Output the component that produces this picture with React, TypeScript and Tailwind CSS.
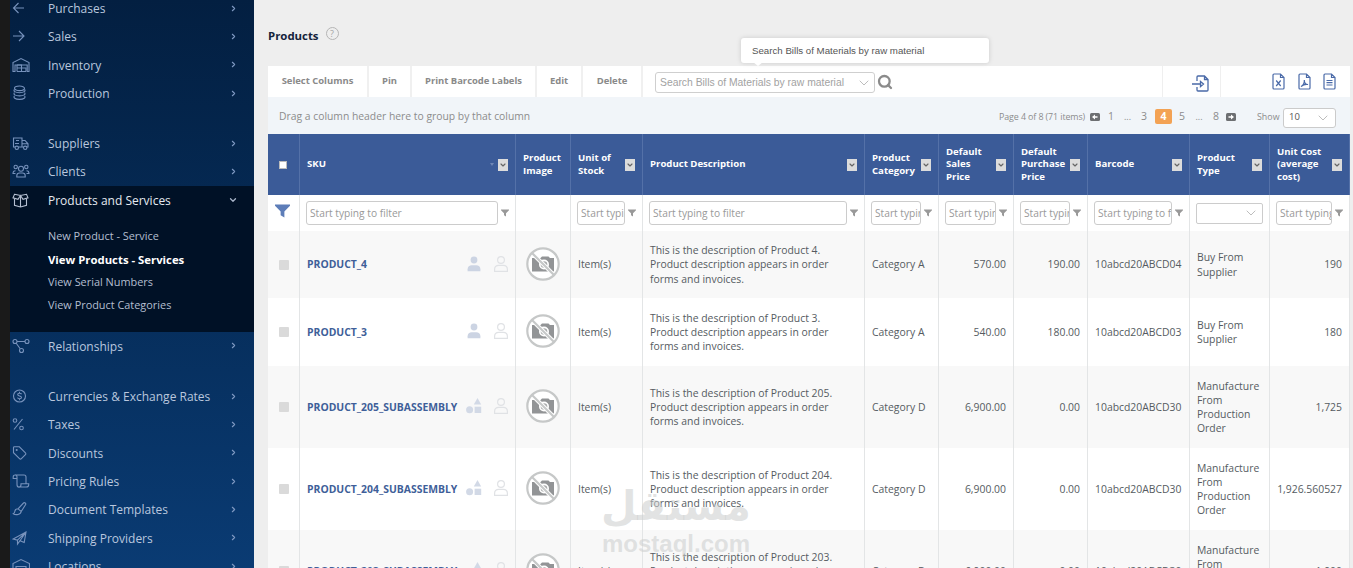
import React from 'react';
import { Search, ChevronRight, ChevronDown } from 'lucide-react';

interface NavItem {
  label: string;
  icon: React.ReactNode;
}

interface Product {
  sku: string;
  assembly: boolean;
  description: string;
  category: string;
  salesPrice: string;
  purchasePrice: string;
  barcode: string;
  type: string;
  unitCost: string;
  height: string;
}

const COLUMNS = 'grid grid-cols-[32px_216px_55px_72px_222px_74px_75px_74px_102px_80px_80px]';

const icons = {
  left: <path d="M12 9H1.500M6.500 4L1.500 9l5 5" />,
  right: <path d="M1 9h10.500M7 4l5 5-5 5" />,
  warehouse: (
    <>
      <path d="M1 15.500V6.500L9 2.500l8 4v9h-1.800V9H3v6.500z" />
      <path d="M5 15.500h9M5 12h4.500M5 9v6.500M5 9h4.500v6.500M9.500 12H14v3.500" />
    </>
  ),
  stack: (
    <>
      <ellipse cx="7.500" cy="4.300" rx="5" ry="2.300" />
      <path d="M2.500 5.500c-1.500 1.500.5 3.200 5 3.200s6.500-1.700 5-3.200M2.500 8.700c-1.500 1.500.5 3.200 5 3.200s6.500-1.700 5-3.200M2.500 11.900c-1.500 1.500.5 3.500 5 3.500s6.500-2 5-3.500" />
    </>
  ),
  truck: (
    <>
      <path d="M3 13H1.500V4h8.500v9H6.500M10 6.500h3l3 3.300V13h-1M10 13h1.500M10 9.800h6M4 6.500h3M3 9.500h4" />
      <circle cx="4.800" cy="13.800" r="1.700" />
      <circle cx="13.200" cy="13.800" r="1.700" />
    </>
  ),
  users: (
    <>
      <circle cx="9" cy="6.800" r="2.500" />
      <path d="M4.800 15v-1.300c0-1.700 1.300-2.700 2.700-2.700h3c1.400 0 2.700 1 2.700 2.700V15zM3.500 8.700C1.800 8.700 1 9.800 1 11.500h2.500M14.500 8.700c1.700 0 2.500 1.100 2.500 2.800h-2.500" />
      <circle cx="3.700" cy="5" r="1.700" />
      <circle cx="14.300" cy="5" r="1.700" />
    </>
  ),
  box: (
    <>
      <path d="M2.500 8v6.300l6 1.700 6-1.700V8M8.500 5v11" />
      <path d="M2.500 3.300L8.500 4.500l6-1.200L16 6.800l-5 1.500L8.500 4.500 6 8.300 1 6.800z" />
    </>
  ),
  relations: (
    <>
      <circle cx="3" cy="4.500" r="2" />
      <circle cx="15" cy="4.500" r="2" />
      <circle cx="9.500" cy="13.500" r="2" />
      <path d="M5 4.500h8M4.200 6.200l4 5.600" />
    </>
  ),
  dollar: (
    <>
      <circle cx="7.500" cy="9" r="6" />
      <path d="M9.500 7.200C9 5.800 5.700 5.900 5.700 7.500c0 2 3.800 1 3.800 3 0 1.700-3.500 1.700-4 .2M7.500 4.800V6M7.500 12v1.300" />
    </>
  ),
  percent: (
    <>
      <path d="M10.500 4L2 14.500" />
      <circle cx="3" cy="5.500" r="1.800" />
      <circle cx="9.500" cy="13" r="1.800" />
    </>
  ),
  tag: (
    <>
      <path d="M1.500 3.500v5.200l6 6c.6.6 1.300.6 1.900 0l4-4c.6-.6.6-1.300 0-1.900l-6-6H2.500c-.600 0-1 .3-1 .7z" />
      <circle cx="4.700" cy="6" r=".5" />
    </>
  ),
  scroll: (
    <path d="M5 6.500H1.200V5C1.200 2.300 5 2.300 5 5v7.500c0 3.500 4 3.500 4 0v-.8h7.700v1c0 1.500-1 2.300-2.500 2.300H7M3.200 3h8.800c1.300 0 2 .8 2 2v6.500" />
  ),
  brush: (
    <path d="M6 8.800L11.500 3c1-1 3 .3 2 1.800L9.200 11.500 6 8.800zM6 8.800c-2 0-3 1-3.200 2.700-.1 1.300-.6 1.800-1.500 2.200 2.500 1.800 7.500 1 7.900-2.200" />
  ),
  plane: <path d="M1.200 10L14 3l-1.800 10.500-4.200-1.800L5.500 15v-3.800zM5.500 11.200L14 3 8 11.700" />,
  location: (
    <>
      <path d="M1 16V6.500L9 2.500l8.500 4V16" />
      <path d="M4 16V9.500h10V16M4 12h10" />
    </>
  ),
};

const mainNav: NavItem[] = [
  { label: 'Purchases', icon: icons.left },
  { label: 'Sales', icon: icons.right },
  { label: 'Inventory', icon: icons.warehouse },
  { label: 'Production', icon: icons.stack },
];

const partnerNav: NavItem[] = [
  { label: 'Suppliers', icon: icons.truck },
  { label: 'Clients', icon: icons.users },
];

const setupNav: NavItem[] = [
  { label: 'Currencies & Exchange Rates', icon: icons.dollar },
  { label: 'Taxes', icon: icons.percent },
  { label: 'Discounts', icon: icons.tag },
  { label: 'Pricing Rules', icon: icons.scroll },
  { label: 'Document Templates', icon: icons.brush },
  { label: 'Shipping Providers', icon: icons.plane },
  { label: 'Locations', icon: icons.location },
];

const productLinks = ['New Product - Service', 'View Products - Services', 'View Serial Numbers', 'View Product Categories'];

const headers = [
  { label: 'SKU', menu: true, sorted: true },
  { label: 'Product Image', menu: false },
  { label: 'Unit of Stock', menu: true },
  { label: 'Product Description', menu: true },
  { label: 'Product Category', menu: true },
  { label: 'Default Sales Price', menu: true },
  { label: 'Default Purchase Price', menu: true },
  { label: 'Barcode', menu: true },
  { label: 'Product Type', menu: true },
  { label: 'Unit Cost (average cost)', menu: true },
];

const products: Product[] = [
  { sku: 'PRODUCT_4', assembly: false, description: 'Product 4', category: 'Category A', salesPrice: '570.00', purchasePrice: '190.00', barcode: '10abcd20ABCD04', type: 'Buy From Supplier', unitCost: '190', height: 'h-[67px]' },
  { sku: 'PRODUCT_3', assembly: false, description: 'Product 3', category: 'Category A', salesPrice: '540.00', purchasePrice: '180.00', barcode: '10abcd20ABCD03', type: 'Buy From Supplier', unitCost: '180', height: 'h-[68px]' },
  { sku: 'PRODUCT_205_SUBASSEMBLY', assembly: true, description: 'Product 205', category: 'Category D', salesPrice: '6,900.00', purchasePrice: '0.00', barcode: '10abcd20ABCD30', type: 'Manufacture From Production Order', unitCost: '1,725', height: 'h-[82px]' },
  { sku: 'PRODUCT_204_SUBASSEMBLY', assembly: true, description: 'Product 204', category: 'Category D', salesPrice: '6,900.00', purchasePrice: '0.00', barcode: '10abcd20ABCD30', type: 'Manufacture From Production Order', unitCost: '1,926.560527', height: 'h-[82px]' },
  { sku: 'PRODUCT_203_SUBASSEMBLY', assembly: true, description: 'Product 203', category: 'Category D', salesPrice: '6,900.00', purchasePrice: '0.00', barcode: '10abcd20ABCD30', type: 'Manufacture From Production Order', unitCost: '1,900', height: 'h-[82px]' },
];

function NavRow({ item, active }: { item: NavItem; active?: boolean }) {
  return (
    <div className="flex h-[28.33px] items-center pl-[2px] pr-[16px]">
      <svg viewBox="0 0 18 18" className={`size-[18px] fill-none ${active ? 'stroke-[#b5c0d2]' : 'stroke-[#7792bc]'}`} strokeWidth="1.1">
        {item.icon}
      </svg>
      <span className={`ml-[18px] flex-1 whitespace-nowrap pt-[2px] text-[12px] font-medium ${active ? 'text-[#e4e9f0]' : 'text-[#b9c7de]'}`}>
        {item.label}
      </span>
      {active ? (
        <ChevronDown className="size-[10px] text-[#a9b6ca]" strokeWidth={3} />
      ) : (
        <ChevronRight className="size-[9px] text-[#7f99c2]" strokeWidth={3} />
      )}
    </div>
  );
}

function Sidebar() {
  return (
    <aside className="w-[254px] shrink-0 overflow-hidden border-l-[10px] border-[#1a1a1a] bg-gradient-to-b from-[#031f41] to-[#0a3b73]">
      <nav className="-mt-[6px] flex flex-col">
        {mainNav.map((item) => (
          <NavRow key={item.label} item={item} />
        ))}
        <div className="mt-[21.700px]">
          {partnerNav.map((item) => (
            <NavRow key={item.label} item={item} />
          ))}
        </div>
        <div className="h-[146px] bg-[#001126]">
          <NavRow item={{ label: 'Products and Services', icon: icons.box }} active />
          <ul className="pl-[38px] pt-[10.500px]">
            {productLinks.map((link, idx) => (
              <li
                key={link}
                className={`flex h-[23.200px] items-center whitespace-nowrap ${
                  idx === 1 ? 'text-[11.350px] font-bold text-white' : 'text-[10.900px] text-[#b4bfd0]'
                }`}
              >
                {link}
              </li>
            ))}
          </ul>
        </div>
        <NavRow item={{ label: 'Relationships', icon: icons.relations }} />
        <div className="mt-[22px]">
          {setupNav.map((item) => (
            <NavRow key={item.label} item={item} />
          ))}
        </div>
      </nav>
    </aside>
  );
}

function DocIcon({ children }: { children: React.ReactNode }) {
  return (
    <svg viewBox="0 0 13 17" className="h-[17px] w-[13px] fill-none stroke-[#4a6aa8]" strokeWidth="1.200">
      <path d="M1 2c0-.6.4-1 1-1h6.500L12 4.500V15c0 .6-.4 1-1 1H2c-.6 0-1-.4-1-1zM8.500 1v3.500H12" />
      {children}
    </svg>
  );
}

function Toolbar() {
  const actions = [
    { label: 'Select Columns', width: 'w-[101px]' },
    { label: 'Pin', width: 'w-[43px]' },
    { label: 'Print Barcode Labels', width: 'w-[125px]' },
    { label: 'Edit', width: 'w-[46px]' },
    { label: 'Delete', width: 'w-[60px]' },
  ];
  return (
    <div className="flex h-[31px] bg-white text-[#8a8a8a]">
      {actions.map((action) => (
        <button key={action.label} className={`${action.width} whitespace-nowrap border-r-2 border-[#f0f0f0] text-[9.450px] font-bold`}>
          {action.label}
        </button>
      ))}
      <div className="relative flex flex-1 items-center pl-[12px]">
        <div className="mt-[2px] flex h-[21px] w-[220px] items-center justify-between rounded-[3px] border border-[#cfcfcf] pl-[4px] pr-[2px] font-['Liberation_Sans',sans-serif] text-[10.350px] text-[#a2a2a2]">
          <span className="whitespace-nowrap">Search Bills of Materials by raw material</span>
          <ChevronDown className="size-[16px] text-[#bdbdbd]" strokeWidth={1.5} />
        </div>
        <Search className="ml-[2px] size-[16px] text-[#8b8b8b]" strokeWidth={3.4} />
        {/* Hint bubble */}
        <div className="absolute left-[98px] top-[-28px] h-[25px] w-[248px] rounded-[3px] bg-white pl-[11px] font-['Liberation_Sans',sans-serif] text-[9.700px] leading-[25px] text-[#555] shadow-[0_0_5px_rgba(0,0,0,0.15)]">
          Search Bills of Materials by raw material
          <span className="absolute left-[12px] top-[24px] border-x-[5px] border-t-[4px] border-x-transparent border-t-white" />
        </div>
      </div>
      <div className="flex w-[58px] items-center justify-center border-l border-[#efefef] pl-[18px] pt-[4px]">
        <svg viewBox="0 0 17 17" className="size-[17px] fill-none stroke-[#4a6aa8]" strokeWidth="1.300">
          <path d="M5 6V2c0-.6.4-1 1-1h6.500L16 4.500V15c0 .6-.4 1-1 1H6c-.6 0-1-.4-1-1v-3M12.500 1v3.500H16M0 9h8.500M8.500 6.500L11.500 9 8.500 11.500z" />
        </svg>
      </div>
      <div className="flex w-[130px] items-center justify-end gap-[12.500px] border-l border-[#efefef] pr-[14px]">
        <DocIcon>
          <path d="M4.200 7.500l4.500 5.500M8.700 7.500l-4.500 5.500" />
        </DocIcon>
        <DocIcon>
          <path d="M3 13.500c2-1 3.500-4 3.300-6.500 0 2.500 1.500 4.500 3.700 4.500-2-.500-4.500 0-7 2z" />
        </DocIcon>
        <DocIcon>
          <path d="M3.500 7.500h6M3.500 9.700h6M3.500 12h6" />
        </DocIcon>
      </div>
    </div>
  );
}

function PageArrow({ flip }: { flip?: boolean }) {
  return (
    <svg viewBox="0 0 10 8" className={`h-[8px] w-[10px] shrink-0 ${flip ? '-scale-x-100' : ''}`}>
      <rect width="10" height="8" rx="1.500" fill="#6d6f72" />
      <path d="M5 1.500L2 4l3 2.500V4.800h2.500V3.200H5z" fill="#fff" />
    </svg>
  );
}

function Pager() {
  return (
    <div className="flex h-[37px] items-center bg-[#f1f5f9] pt-[2px] text-[#8c8c8c]">
      <span className="pl-[11px] text-[10.350px]">Drag a column header here to group by that column</span>
      <div className="ml-auto flex items-center text-[10.500px]">
        <span className="w-[91px] whitespace-nowrap text-[8.900px] tracking-[-0.1px]">Page 4 of 8 (71 items)</span>
        <PageArrow />
        <span className="w-[22px] text-center">1</span>
        <span className="w-[11px] text-center text-[9px]">...</span>
        <span className="w-[22px] text-center">3</span>
        <span className="h-[15px] w-[17px] rounded-[2px] bg-[#f3a254] text-center font-bold leading-[15px] text-white">4</span>
        <span className="w-[20px] text-center">5</span>
        <span className="w-[14px] text-center text-[9px]">...</span>
        <span className="w-[20px] text-center">8</span>
        <PageArrow flip />
        <span className="ml-[21px] w-[26px] text-[8.900px]">Show</span>
        <div className="mr-[14px] mt-[2px] flex h-[20px] w-[53px] items-center justify-between rounded-[3px] border border-[#cbcbcb] bg-white pl-[5px] pr-[4px] text-[9.500px] text-[#555]">
          10
          <ChevronDown className="size-[16px] text-[#bdbdbd]" strokeWidth={1.5} />
        </div>
      </div>
    </div>
  );
}

function Funnel({ className }: { className: string }) {
  return (
    <svg viewBox="0 0 16 14" className={className} fill="currentColor">
      <path d="M0 0h16v1.500L10 7.500V14L6 11.500v-4L0 1.500z" />
    </svg>
  );
}

function HeaderRow() {
  return (
    <div className={`${COLUMNS} h-[61px] bg-[#3b5b98] text-[9.600px] font-bold leading-[12.300px] text-white`}>
      <div className="flex items-center justify-center border-r border-[#5471a8]">
        <span className="-ml-[2px] size-[8px] border border-[#bbb] bg-white" />
      </div>
      {headers.map((header) => (
        <div key={header.label} className="flex items-center justify-between border-r border-[#5471a8] pl-[7px] pr-[7px]">
          <span>{header.label}</span>
          {header.menu && (
            <span className="flex items-center gap-[4px]">
              {header.sorted && <span className="border-x-[2.500px] border-t-[3px] border-x-transparent border-t-[#6f87b5]" />}
              <span className="flex h-[12px] w-[10px] items-center justify-center bg-[#dcdcdc]">
                <ChevronDown className="size-[8px] text-[#666]" strokeWidth={3.5} />
              </span>
            </span>
          )}
        </div>
      ))}
    </div>
  );
}

function FilterRow() {
  return (
    <div className={`${COLUMNS} h-[36px] bg-white`}>
      <div className="flex justify-center border-r border-[#e3e5e6] pr-[3px] pt-[9px]">
        <Funnel className="h-[14px] w-[15px] text-[#5d7db8]" />
      </div>
      {headers.map((header) => (
        <div key={header.label} className="flex items-center border-r border-[#e3e5e6] pl-[6px] pr-[6px]">
          {header.menu && header.label !== 'Product Type' && (
            <>
              <div className="h-[24px] min-w-0 flex-1 overflow-hidden whitespace-nowrap rounded-[3px] border border-[#cccccc] pl-[3px] text-[10.200px] leading-[23px] text-[#999]">
                <div className="overflow-hidden">Start typing to filter</div>
              </div>
              <Funnel className="ml-[3px] h-[8px] w-[8px] shrink-0 text-[#999]" />
            </>
          )}
          {header.label === 'Product Type' && (
            <div className="flex h-[21px] w-[68px] items-center justify-end rounded-[2px] border border-[#cccccc] pr-[3px]">
              <ChevronDown className="size-[16px] text-[#bdbdbd]" strokeWidth={1.5} />
            </div>
          )}
        </div>
      ))}
    </div>
  );
}

function NoImage() {
  return (
    <svg viewBox="0 0 34 34" className="size-[34px]">
      <circle cx="17" cy="17" r="16" fill="#fff" />
      <path d="M6 11h2v-1h4v1h2.500l1.500-1.500h6.500L24 11h4v13.500H6z" fill="#929496" />
      <circle cx="18" cy="17.500" r="5" fill="#fff" />
      <circle cx="18" cy="17.500" r="3.300" fill="#a9abac" />
      <path d="M6 6l22 22" stroke="#fff" strokeWidth="4" />
      <path d="M6 6l22 22" stroke="#c6c8c8" strokeWidth="2.200" />
      <circle cx="17" cy="17" r="15.700" fill="none" stroke="#c6c8c8" strokeWidth="2.200" />
    </svg>
  );
}

function PersonIcon({ solid }: { solid?: boolean }) {
  return (
    <svg
      viewBox="0 0 14 16"
      className="h-[16px] w-[14px]"
      fill={solid ? '#ccd4e3' : 'none'}
      stroke={solid ? 'none' : '#e0e2e5'}
      strokeWidth="1.200"
    >
      <circle cx="7" cy="4" r="3.400" />
      <path d="M.6 15.300v-2c0-2.600 1.800-4 4.200-4h4.400c2.400 0 4.200 1.400 4.200 4v2z" />
    </svg>
  );
}

function AssemblyIcon() {
  return (
    <svg viewBox="0 0 16 16" className="h-[16px] w-[16px]" fill="#d2d9e6">
      <path d="M11.500 0l3.700 6.500H7.800z" />
      <circle cx="3.600" cy="11.700" r="3.500" />
      <rect x="8.600" y="8.700" width="6.600" height="6.300" />
    </svg>
  );
}

function ProductRow({ product, striped }: { product: Product; striped: boolean }) {
  const cell = 'flex items-center border-r border-[#e3e5e6] px-[7px]';
  return (
    <div className={`${COLUMNS} ${product.height} text-[10.400px] leading-[14.200px] text-[#555b61] ${striped ? 'bg-[#f8f8f8]' : 'bg-white'}`}>
      <div className="flex items-center justify-center border-r border-[#e3e5e6]">
        <span className="size-[10px] rounded-[1px] bg-[#dadada]" />
      </div>
      <div className={cell}>
        <span className="flex-1 whitespace-nowrap font-bold text-[#3f5f99]">{product.sku}</span>
        <span className="flex w-[42px] items-center justify-between pb-[2px]">
          {product.assembly ? <AssemblyIcon /> : <span className="pl-[1px]"><PersonIcon solid /></span>}
          <PersonIcon />
        </span>
      </div>
      <div className="flex items-center justify-center border-r border-[#e3e5e6] pb-[2px]">
        <NoImage />
      </div>
      <div className={cell}>Item(s)</div>
      <div className={cell}>
        <p className="w-[190px]">
          {`This is the description of ${product.description}. Product description appears in order forms and invoices.`}
        </p>
      </div>
      <div className={`${cell} whitespace-nowrap`}>{product.category}</div>
      <div className={`${cell} justify-end`}>{product.salesPrice}</div>
      <div className={`${cell} justify-end`}>{product.purchasePrice}</div>
      <div className={cell}>{product.barcode}</div>
      <div className={cell}>{product.type}</div>
      <div className={`${cell} justify-end`}>{product.unitCost}</div>
    </div>
  );
}

export default function App() {
  return (
    <div className="relative flex h-[568px] w-[1353px] overflow-hidden bg-[#eeeeee] font-['Open_Sans',sans-serif]">
      <Sidebar />
      <main className="flex-1 pl-[14px] pr-[3px]">
        <div className="flex h-[66px] items-start gap-[7px] pt-[27px]">
          <h1 className="text-[11.400px] font-bold leading-[17px] text-[#15233b]">Products</h1>
          <span className="size-[13px] rounded-full border border-[#b5b5b5] text-center text-[9px] leading-[11px] text-[#a5a5a5]">?</span>
        </div>
        <Toolbar />
        <Pager />
        <HeaderRow />
        <FilterRow />
        {products.map((product, idx) => (
          <ProductRow key={product.sku} product={product} striped={idx % 2 === 0} />
        ))}
      </main>

      {/* Watermark */}
      <div className="absolute left-[601px] top-[485px] w-[150px] text-center font-bold text-[#c9cccc]/55">
        <div lang="ar" dir="rtl" className="h-[45px] whitespace-nowrap font-['DejaVu_Sans',sans-serif] text-[41px] leading-[42px]">
          مستقل
        </div>
        <div className="whitespace-nowrap font-['Liberation_Sans',sans-serif] text-[24px] leading-[28px]">mostaql.com</div>
      </div>
    </div>
  );
}
